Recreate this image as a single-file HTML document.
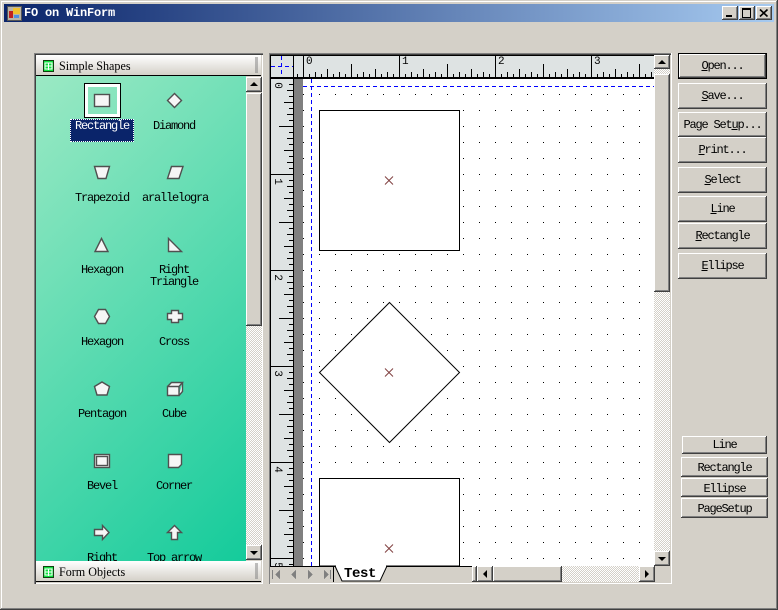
<!DOCTYPE html>
<html><head><meta charset="utf-8"><title>FO on WinForm</title>
<style>
html,body{margin:0;padding:0;width:778px;height:610px;overflow:hidden;background:#d4d0c8}
body{position:relative;font-family:"Liberation Mono",monospace;font-size:12px;letter-spacing:-1.2px;color:#000}
div,svg,span.a{position:absolute;display:block}
.btn{background:#d4d0c8;box-shadow:inset -1px -1px #404040,inset 1px 1px #fff,inset -2px -2px #808080;text-align:center;white-space:nowrap}
.def{box-shadow:inset 0 0 0 1px #000,inset -2px -2px #404040,inset 2px 2px #fff,inset -3px -3px #808080}
.sb{background:#d4d0c8;box-shadow:inset -1px -1px #404040,inset 1px 1px #fff,inset -2px -2px #808080}
.chk{background:repeating-conic-gradient(#d4d0c8 0 25%,#fff 0 50%) 0 0/2px 2px}
.hdr{background:linear-gradient(#fff,#d4d0c8)}
.lb{width:72px;text-align:center;line-height:12px;white-space:nowrap}
.sans{font-family:"Liberation Serif",serif;letter-spacing:0;font-size:13px;white-space:nowrap;transform:scaleX(.93);transform-origin:0 0}
.rn{left:0;width:12px;text-align:center;line-height:12px;font-size:11px;transform:rotate(90deg)}
</style></head><body>
<!-- window frame -->
<div style="left:0;top:0;width:778px;height:610px;box-shadow:inset -1px -1px #404040,inset 1px 1px #d4d0c8,inset -2px -2px #808080,inset 2px 2px #fff"></div>
<div style="left:4px;top:4px;width:770px;height:18px;background:linear-gradient(90deg,#0a246a,#a6caf0)"></div>
<svg style="left:7px;top:6px" width="15" height="15" shape-rendering="crispEdges"><rect width="14" height="14" fill="#b8b4a8" stroke="#555" x=".5" y=".5"/><rect x="6" y="2" width="7" height="6" fill="#f0c030"/><rect x="2" y="5" width="4" height="7" fill="#c02020"/><rect x="7" y="9" width="5" height="3" fill="#5090e0"/></svg>
<div style="left:24px;top:7px;color:#fff;font-weight:bold;font-size:12px;letter-spacing:-.2px;line-height:13px;white-space:nowrap">FO on WinForm</div>
<div class="sb" style="left:722px;top:6px;width:16px;height:14px"></div>
<div style="left:726px;top:15px;width:6px;height:2px;background:#000"></div>
<div class="sb" style="left:739px;top:6px;width:16px;height:14px"></div>
<div style="left:742px;top:8px;width:7px;height:7px;border:1px solid #000;border-top-width:2px"></div>
<div class="sb" style="left:756px;top:6px;width:16px;height:14px"></div>
<svg style="left:756px;top:6px" width="16" height="14"><path d="M4 3.500L11.500 10.500M11.500 3.500L4 10.500" stroke="#000" stroke-width="1.6"/></svg>

<!-- left panel -->
<div style="left:34px;top:53px;width:229px;height:531px;box-shadow:inset 1px 1px #808080,inset 2px 2px #404040,inset -1px -1px #fff"></div>
<div class="hdr" style="left:36px;top:55px;width:225px;height:20px"></div>
<div style="left:36px;top:75px;width:225px;height:1px;background:#000"></div>
<svg style="left:43px;top:60px" width="11" height="12" shape-rendering="crispEdges"><rect x=".5" y=".5" width="10" height="11" fill="#10e040" stroke="#104010"/><path d="M2 6h7M5.500 3v7M2 3h7v6H2z" stroke="#fff" fill="none"/></svg>
<div class="sans" style="left:59px;top:58px;line-height:16px">Simple Shapes</div>
<svg style="left:255px;top:57px" width="4" height="17"><path d="M0 1h3M0 3h3M0 5h3M0 7h3M0 9h3M0 11h3M0 13h3M0 15h3" stroke="#808080"/></svg>

<div id="list" style="left:36px;top:76px;width:210px;height:485px;background:linear-gradient(135deg,#9be9c4,#14cb9b);overflow:hidden"></div>
<div style="left:36px;top:76px;width:210px;height:485px;overflow:hidden">
 <div style="left:48px;top:7px;width:35px;height:33px;border:1px solid #000;box-shadow:inset 0 0 0 3px #fff"></div>
 <div style="left:34px;top:43px;width:62px;height:21px;background:#0a246a;border:1px dotted #fff"></div>
 <div class="lb" style="left:30px;top:44px;color:#fff">Rectangle</div>
 <div class="lb" style="left:102px;top:44px">Diamond</div>
 <div class="lb" style="left:30px;top:116px">Trapezoid</div>
 <div class="lb" style="left:103px;top:116px">arallelogra</div>
 <div class="lb" style="left:30px;top:188px">Hexagon</div>
 <div class="lb" style="left:102px;top:188px">Right<br>Triangle</div>
 <div class="lb" style="left:30px;top:260px">Hexagon</div>
 <div class="lb" style="left:102px;top:260px">Cross</div>
 <div class="lb" style="left:30px;top:332px">Pentagon</div>
 <div class="lb" style="left:102px;top:332px">Cube</div>
 <div class="lb" style="left:30px;top:404px">Bevel</div>
 <div class="lb" style="left:102px;top:404px">Corner</div>
 <div class="lb" style="left:30px;top:476px">Right</div>
 <div class="lb" style="left:102px;top:476px">Top arrow</div>
</div>
<svg style="left:0;top:0" width="246" height="561" fill="#f6f6f6" stroke="#505050" stroke-width="1.4">
 <rect x="94.500" y="94.500" width="15" height="12"/>
 <path d="M174.500 93.500l7 7-7 7-7-7z"/>
 <path d="M94.500 166.500h15l-3.500 12h-8z"/>
 <path d="M171.500 166.500h11.500l-4 12h-11.500z"/>
 <path d="M101.500 238.500l6.500 13h-13z"/>
 <path d="M168.500 238.500l13 13h-13z"/>
 <path d="M98.500 309.500h7l4 7-4 7h-7l-4-7z"/>
 <path d="M171.500 310.500h7v3h4v6h-4v3h-7v-3h-4v-6h4z"/>
 <path d="M102 382l7.500 4.500-2.500 8.500h-10l-2.500-8.500z"/>
 <path d="M167.500 386.500h11.500v9h-11.500zM167.500 386.500l4-4h11l-3.500 4M182.500 382.500v9l-3.500 4"/>
 <rect x="94.500" y="454.500" width="15" height="13"/><rect x="96.500" y="456.500" width="11" height="9"/>
 <path d="M168.500 454.500h13v10l-3 3h-10z"/>
 <path d="M94.500 529.500h8v-4l6.500 7-6.500 7v-4h-8z"/>
 <path d="M174.500 525.500l7 7h-4v7h-6v-7h-4z"/>
</svg>
<div class="sb" style="left:246px;top:77px;width:16px;height:15px"></div>
<svg style="left:246px;top:77px" width="16" height="15"><path d="M4 9h8l-4-4z"/></svg>
<div class="sb" style="left:246px;top:93px;width:16px;height:233px"></div>
<div class="chk" style="left:246px;top:326px;width:16px;height:219px"></div>
<div class="sb" style="left:246px;top:545px;width:16px;height:15px"></div>
<svg style="left:246px;top:545px" width="16" height="15"><path d="M4 6h8l-4 4z"/></svg>
<div class="hdr" style="left:36px;top:561px;width:225px;height:20px"></div>
<div style="left:36px;top:581px;width:225px;height:1px;background:#000"></div>
<svg style="left:43px;top:566px" width="11" height="12" shape-rendering="crispEdges"><rect x=".5" y=".5" width="10" height="11" fill="#10e040" stroke="#104010"/><path d="M2 6h7M5.500 3v7M2 3h7v6H2z" stroke="#fff" fill="none"/></svg>
<div class="sans" style="left:59px;top:564px;line-height:16px">Form Objects</div>
<svg style="left:255px;top:563px" width="4" height="17"><path d="M0 1h3M0 3h3M0 5h3M0 7h3M0 9h3M0 11h3M0 13h3M0 15h3" stroke="#808080"/></svg>

<!-- canvas -->
<div style="left:269px;top:53px;width:403px;height:531px;box-shadow:inset 1px 1px #808080,inset 2px 2px #404040,inset -1px -1px #fff"></div>
<svg style="left:0;top:0" width="778" height="610" shape-rendering="crispEdges">
 <defs>
  <pattern id="hr" patternUnits="userSpaceOnUse" x="303" y="55" width="96" height="23">
   <path stroke="#000" d="M.5 0v23M6.500 19v4M12.500 17v6M18.500 19v4M24.500 14v9M30.500 19v4M36.500 17v6M42.500 19v4M48.500 9v14M54.500 19v4M60.500 17v6M66.500 19v4M72.500 14v9M78.500 19v4M84.500 17v6M90.500 19v4"/>
  </pattern>
  <pattern id="vr" patternUnits="userSpaceOnUse" x="271" y="78" width="22" height="96">
   <path stroke="#000" d="M0 .5h22M18 6.500h4M16 12.500h6M18 18.500h4M13 24.500h9M18 30.500h4M16 36.500h6M18 42.500h4M8 48.500h14M18 54.500h4M16 60.500h6M18 66.500h4M13 72.500h9M18 78.500h4M16 84.500h6M18 90.500h4"/>
  </pattern>
  <pattern id="dots" patternUnits="userSpaceOnUse" x="303" y="94" width="16" height="16"><rect width="1" height="1" fill="#000"/></pattern>
 </defs>
 <rect x="271" y="55" width="383" height="23" fill="#dee3e3"/>
 <rect x="293" y="55" width="361" height="23" fill="url(#hr)"/>
 <rect x="271" y="78" width="22" height="488" fill="#dee3e3"/>
 <rect x="271" y="78" width="22" height="488" fill="url(#vr)"/>
 <rect x="271" y="55" width="383" height="1" fill="#000"/>
 <rect x="270" y="55" width="1" height="511" fill="#000"/>
 <rect x="271" y="77" width="383" height="2" fill="#000"/>
 <rect x="293" y="55" width="1" height="511" fill="#000"/>
 <rect x="294" y="79" width="9" height="487" fill="#808080"/>
 <rect x="303" y="79" width="351" height="487" fill="#fff"/>
 <rect x="303" y="94" width="351" height="472" fill="url(#dots)"/>
 <path d="M303 86.500H654" stroke="#0000ff" stroke-dasharray="4 3"/>
 <path d="M311.500 79V566" stroke="#0000ff" stroke-dasharray="4 3"/>
 <path d="M271 66.500H293" stroke="#0000ff" stroke-dasharray="4 3"/>
 <path d="M281.500 56V77" stroke="#0000ff" stroke-dasharray="4 3"/>
 <rect x="319.500" y="110.500" width="140" height="140" fill="#fff" stroke="#000"/>
 <path d="M319.500 566V478.500H459.500V566Z" fill="#fff" stroke="#000"/>
 <path d="M389.500 302.500L459.500 372.500 389.500 442.500 319.500 372.500Z" fill="#fff" stroke="#000" shape-rendering="auto"/>
 <g stroke="#804040" fill="none" shape-rendering="auto">
  <path d="M385 176.500l8 8M393 176.500l-8 8"/>
  <path d="M385 368.500l8 8M393 368.500l-8 8"/>
  <path d="M385 544.500l8 8M393 544.500l-8 8"/>
 </g>
 <rect x="270" y="566" width="402" height="17" fill="#d4d0c8"/>
 <rect x="270" y="566" width="202" height="1" fill="#000"/>
 <rect x="333" y="567" width="1" height="15" fill="#000"/>
 <path d="M335 566L342 581H380L387 566Z" fill="#fff" stroke="#000" shape-rendering="auto"/>
 <rect x="336" y="565" width="50" height="2" fill="#fff"/>
 <g fill="#808080">
  <rect x="272" y="570" width="1" height="9"/><path d="M280 570v9l-5-4.500z"/>
  <path d="M296 570v9l-5-4.500z"/>
  <path d="M308 570v9l5-4.500z"/>
  <path d="M324 570v9l5-4.500z"/><rect x="330" y="570" width="1" height="9"/>
 </g>
 <rect x="270" y="583" width="402" height="1" fill="#fff"/>
 <rect x="671" y="53" width="1" height="531" fill="#fff"/>
</svg>
<div style="left:306px;top:56px;line-height:12px;font-size:11px">0</div>
<div style="left:402px;top:56px;line-height:12px;font-size:11px">1</div>
<div style="left:498px;top:56px;line-height:12px;font-size:11px">2</div>
<div style="left:594px;top:56px;line-height:12px;font-size:11px">3</div>
<div style="left:271px;top:78px;width:22px;height:488px;overflow:hidden">
 <div class="rn" style="top:1px">0</div>
 <div class="rn" style="top:97px">1</div>
 <div class="rn" style="top:193px">2</div>
 <div class="rn" style="top:289px">3</div>
 <div class="rn" style="top:385px">4</div>
 <div class="rn" style="top:481px">5</div>
</div>
<div style="left:344px;top:567px;font-weight:bold;font-size:14px;letter-spacing:-.4px;line-height:15px">Test</div>

<!-- canvas scrollbars -->
<div class="sb" style="left:654px;top:55px;width:16px;height:14px"></div>
<svg style="left:654px;top:55px" width="16" height="14"><path d="M4 9h8l-4-4z"/></svg>
<div class="chk" style="left:654px;top:69px;width:16px;height:5px"></div>
<div class="sb" style="left:654px;top:74px;width:16px;height:218px"></div>
<div class="chk" style="left:654px;top:292px;width:16px;height:259px"></div>
<div class="sb" style="left:654px;top:551px;width:16px;height:15px"></div>
<svg style="left:654px;top:551px" width="16" height="15"><path d="M4 6h8l-4 4z"/></svg>
<div class="sb" style="left:472px;top:566px;width:5px;height:16px"></div>
<div class="sb" style="left:477px;top:566px;width:16px;height:16px"></div>
<svg style="left:477px;top:566px" width="16" height="16"><path d="M10 4v8l-4-4z"/></svg>
<div class="sb" style="left:493px;top:566px;width:69px;height:16px"></div>
<div class="chk" style="left:562px;top:566px;width:77px;height:16px"></div>
<div class="sb" style="left:639px;top:566px;width:16px;height:16px"></div>
<svg style="left:639px;top:566px" width="16" height="16"><path d="M6 4v8l4-4z"/></svg>

<!-- buttons -->
<div class="btn def" style="left:678px;top:53px;width:89px;height:26px;line-height:27px"><u>O</u>pen...</div>
<div class="btn" style="left:678px;top:83px;width:89px;height:26px;line-height:27px"><u>S</u>ave...</div>
<div class="btn" style="left:678px;top:112px;width:89px;height:25px;line-height:26px">Page Set<u>u</u>p...</div>
<div class="btn" style="left:678px;top:137px;width:89px;height:26px;line-height:26px"><u>P</u>rint...</div>
<div class="btn" style="left:678px;top:167px;width:89px;height:26px;line-height:27px"><u>S</u>elect</div>
<div class="btn" style="left:678px;top:196px;width:89px;height:26px;line-height:27px"><u>L</u>ine</div>
<div class="btn" style="left:678px;top:223px;width:89px;height:26px;line-height:27px"><u>R</u>ectangle</div>
<div class="btn" style="left:678px;top:253px;width:89px;height:26px;line-height:27px"><u>E</u>llipse</div>
<div class="btn" style="left:682px;top:436px;width:85px;height:18px;line-height:18px">Line</div>
<div class="btn" style="left:681px;top:457px;width:87px;height:20px;line-height:22px">Rectangle</div>
<div class="btn" style="left:681px;top:478px;width:87px;height:19px;line-height:22px">Ellipse</div>
<div class="btn" style="left:681px;top:498px;width:87px;height:20px;line-height:22px">PageSetup</div>
</body></html>
